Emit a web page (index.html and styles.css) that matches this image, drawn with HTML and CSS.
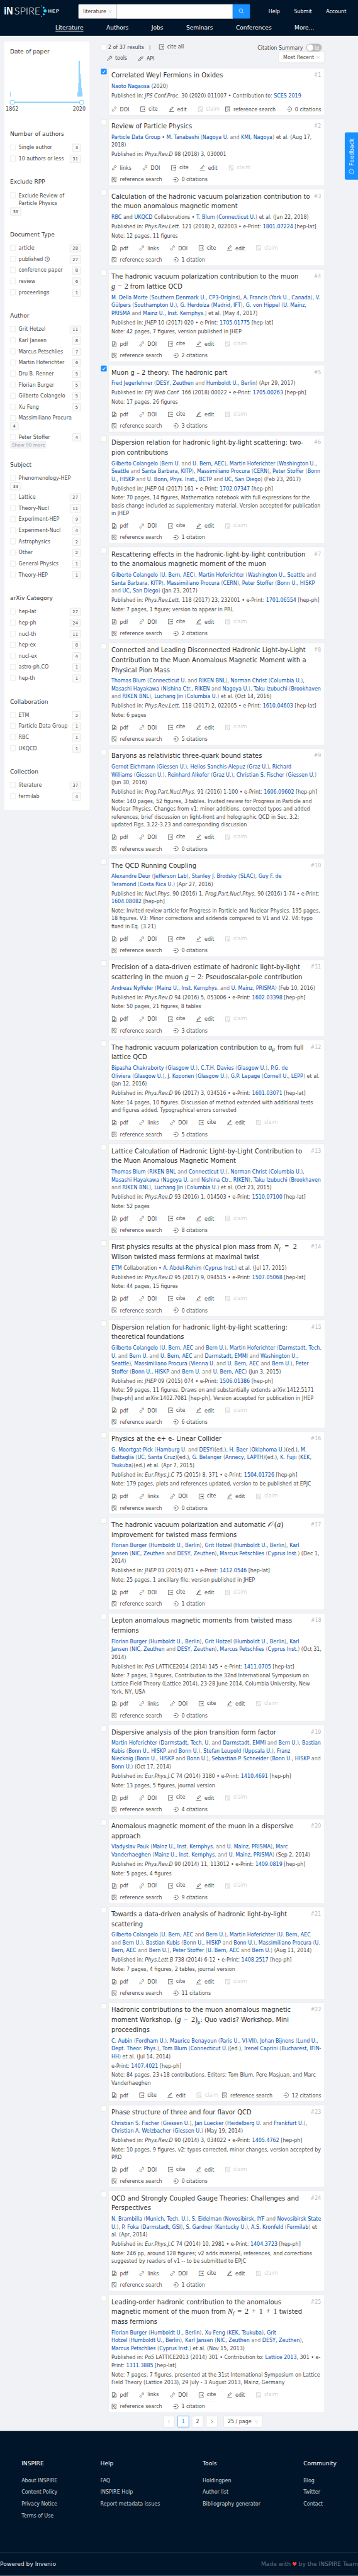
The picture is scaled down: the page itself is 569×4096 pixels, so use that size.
FILE: index.html
```html
<!DOCTYPE html>
<html lang="en">
<head>
<meta charset="utf-8">
<title>INSPIRE - Literature search</title>
<link rel="stylesheet" href="styles.css">
</head>
<body>
<svg class="defs" aria-hidden="true">
<symbol id="pdf" viewBox="0 0 16 16"><path d="M2.5 1.2h7l4 4v9.6h-11zM9.2 1.4v4h4"/><path d="M5 12.3c2-1 3-3 3-5.3 0 2.500 1.200 3.700 3.200 4.200-2.200-.2-4.200.1-6.200 1.100z"/></symbol>
<symbol id="link" viewBox="0 0 16 16"><path d="M6.200 9.800l3.600-3.600M7.300 4.600l1.900-1.900c1.200-1.200 2.700-1.200 3.700-.2s1 2.500-.2 3.700l-1.900 1.900M8.700 11.400l-1.900 1.900c-1.200 1.200-2.700 1.200-3.700.2s-1-2.500.2-3.700l1.900-1.900"/></symbol>
<symbol id="cite" viewBox="0 0 16 16"><path d="M14 4.500v-3H2v13h12v-3M6 8h8"/><path d="M11.300 5.600l3.200 2.400-3.200 2.400z" fill="currentColor" stroke="none"/></symbol>
<symbol id="edit" viewBox="0 0 16 16"><path d="M4.200 8.500l7-7 2 2-7 7-2.600.6zM1 14.600h14" stroke-width="1.4"/></symbol>
<symbol id="claim" viewBox="0 0 16 16"><path d="M7 14.500H2v-13h11v6M4.500 4.700h6M4.500 7.700h3"/><circle cx="11" cy="11.800" r="3.300"/><path d="M9.500 11.800l1.100 1.200 2-2.300"/></symbol>
<symbol id="ref" viewBox="0 0 16 16"><path d="M7 14.500H2v-13h11.500v6M4.500 4.700h6.500M4.500 7.700h3"/><circle cx="10.800" cy="11" r="2.500"/><path d="M12.700 13l1.800 2"/></symbol>
<symbol id="cit" viewBox="0 0 16 16"><path d="M4.500 2.800a6.500 6.500 0 1 1 0 10.400M.8 8h7"/><path d="M6.800 5.700l3.200 2.300-3.200 2.300z" fill="currentColor" stroke="none"/></symbol>
<symbol id="tool" viewBox="0 0 16 16"><path d="M9 2.500c1.300-1.200 2.700-1.300 3.900-1L10.500 4l1.600 1.600 2.400-2.400c.6 1.500.1 3-.8 4-1.100 1.100-2.700 1.300-3.900.8L4 13.800c-.6.7-1.500.7-2.100 0s-.6-1.500.1-2.100l5.900-5.700c-.5-1.300-.2-2.500 1.100-3.500z"/></symbol>
<symbol id="api" viewBox="0 0 16 16"><path d="M8.300 4.500l3.300 3.300M9.300 3.500c1.200-1.200 2.700-1.200 3.700-.2s1 2.500-.2 3.700L11.300 8.500 7.500 4.700zM13 3l1.800-1.800M4.700 7.500l3.800 3.800-1.600 1.500c-1.200 1.200-2.700 1.200-3.700.2s-1-2.500.2-3.700zM3 13l-1.800 1.800M6.200 8.500l1.300-1.300M7.700 10l1.300-1.300"/></symbol>
<symbol id="down" viewBox="0 0 12 12"><path d="M2 2.500l4 6.500 4-6.500"/></symbol>
</svg>
<div class="window"><div class="page">
<header class="top">
<div class="top-row">
<svg class="logo" viewBox="0 0 160 36"><text class="lg-b" x="-.8" y="26.700" textLength="25" lengthAdjust="spacingAndGlyphs">iN</text><text class="lg-l" x="28" y="26.700" textLength="73" lengthAdjust="spacingAndGlyphs">SPIRE</text><text class="lg-h" x="122.500" y="21.200" textLength="33" lengthAdjust="spacing">HEP</text><g class="dots"><circle cx="2.300" cy="9" r="2.300"/><circle cx="104" cy="2.600" r="1.600"/><circle cx="109.800" cy="7.300" r="2.800"/><circle cx="114" cy="16.300" r="4.400"/><circle cx="110.200" cy="26" r="2.800"/><circle cx="104" cy="31.600" r="1.600"/></g></svg>
<div class="search"><span class="scope">literature <svg class="dn"><use href="#down"/></svg></span><span class="field"></span><span class="go"><svg viewBox="0 0 16 16"><circle cx="6.800" cy="6.500" r="5"/><path d="M10.300 10.300l4.500 4.700"/></svg></span></div>
<div class="acct"><a>Help</a><a>Submit</a><a>Account</a></div>
</div>
<nav><a class="on">Literature</a><a>Authors</a><a>Jobs</a><a>Seminars</a><a>Conferences</a><a>More...</a></nav>
</header>
<div class="body">
<aside>
<h3>Date of paper</h3>
<svg class="hist" viewBox="0 0 204 100"><path d="M0 87.500h2v12.500H0zM188 87.500h2.500V62h1V0h4v37.500h2V50h1.500v25h1.500v12.500h2V100H188z"/></svg>
<div class="slider"><b></b><b></b></div>
<div class="years"><span>1862</span><span>2020</span></div>
<h3>Number of authors</h3>
<ul><li><u></u><p>Single author</p><em>3</em></li><li><u></u><p>10 authors or less</p><em>31</em></li></ul>
<h3>Exclude RPP</h3>
<ul><li class="wrap"><u></u><p>Exclude Review of<br>Particle Physics</p><em>36</em></li></ul>
<h3>Document Type</h3>
<ul><li><u></u><p>article</p><em>28</em></li><li><u></u><p>published <svg class="q" viewBox="0 0 14 14"><circle cx="7" cy="7" r="6.300"/><path d="M5 5.500c0-2.700 4-2.500 4 0 0 1.500-2 1.500-2 3M7 9.700v1.200"/></svg></p><em>27</em></li><li><u></u><p>conference paper</p><em>8</em></li><li><u></u><p>review</p><em>6</em></li><li><u></u><p>proceedings</p><em>1</em></li></ul>
<h3>Author</h3>
<ul><li><u></u><p>Grit Hotzel</p><em>11</em></li><li><u></u><p>Karl Jansen</p><em>8</em></li><li><u></u><p>Marcus Petschlies</p><em>7</em></li><li><u></u><p>Martin Hoferichter</p><em>6</em></li><li><u></u><p>Dru B. Renner</p><em>5</em></li><li><u></u><p>Florian Burger</p><em>5</em></li><li><u></u><p>Gilberto Colangelo</p><em>5</em></li><li><u></u><p>Xu Feng</p><em>5</em></li><li class="wrap"><u></u><p>Massimiliano Procura</p><em>4</em></li><li><u></u><p>Peter Stoffer</p><em>4</em></li></ul>
<span class="more">Show 90 more</span>
<h3>Subject</h3>
<ul><li class="wrap"><u></u><p>Phenomenology-HEP</p><em>33</em></li><li><u></u><p>Lattice</p><em>27</em></li><li><u></u><p>Theory-Nucl</p><em>11</em></li><li><u></u><p>Experiment-HEP</p><em>9</em></li><li><u></u><p>Experiment-Nucl</p><em>4</em></li><li><u></u><p>Astrophysics</p><em>2</em></li><li><u></u><p>Other</p><em>2</em></li><li><u></u><p>General Physics</p><em>1</em></li><li><u></u><p>Theory-HEP</p><em>1</em></li></ul>
<h3>arXiv Category</h3>
<ul><li><u></u><p>hep-lat</p><em>27</em></li><li><u></u><p>hep-ph</p><em>24</em></li><li><u></u><p>nucl-th</p><em>11</em></li><li><u></u><p>hep-ex</p><em>8</em></li><li><u></u><p>nucl-ex</p><em>4</em></li><li><u></u><p>astro-ph.CO</p><em>1</em></li><li><u></u><p>hep-th</p><em>1</em></li></ul>
<h3>Collaboration</h3>
<ul><li><u></u><p>ETM</p><em>2</em></li><li><u></u><p>Particle Data Group</p><em>1</em></li><li><u></u><p>RBC</p><em>1</em></li><li><u></u><p>UKQCD</p><em>1</em></li></ul>
<h3>Collection</h3>
<ul><li><u></u><p>literature</p><em>37</em></li><li><u></u><p>fermilab</p><em>4</em></li></ul>
</aside>
<main>
<div class="bar">
<div class="bar-l"><div class="line"><u></u><span class="count">2 of 37 results</span><span class="sep"></span><span class="act up"><svg><use href="#cite"/></svg>cite all</span></div>
<div class="line two"><span class="act up"><svg><use href="#tool"/></svg>tools</span><span class="act"><svg><use href="#api"/></svg>API</span></div></div>
<div class="bar-r"><div class="sum">Citation Summary <span class="switch"><i></i><svg viewBox="0 0 12 12"><path d="M1 .5v10.500h10.500M3.500 9V6M6 9V3.500M8 9V5.500M10.200 9V2"/></svg></span></div><span class="sort">Most Recent <svg class="dn"><use href="#down"/></svg></span></div>
</div>

<article><u class="ck"><svg viewBox="0 0 16 16"><path d="M4 8l3 3.200 5.200-6.400"/></svg></u><div class="card">
<div class="head"><h2>Correlated Weyl Fermions in Oxides</h2><b>#1</b></div>
<p class="au"><a>Naoto Nagaosa</a> (2020)</p>
<p>Published in: <i>JPS Conf.Proc.</i> 30 (2020) 011007 • Contribution to: <a>SCES 2019</a></p>
<div class="acts nonote"><div><span class="act"><svg><use href="#link"/></svg>DOI</span><span class="act up"><svg><use href="#cite"/></svg>cite</span><span class="act"><svg><use href="#edit"/></svg>edit</span><span class="act off"><svg><use href="#claim"/></svg>claim</span></div><div><span class="act"><svg><use href="#ref"/></svg>reference search</span><span class="act"><svg><use href="#cit"/></svg>0 citations</span></div></div></div></article>

<article><u></u><div class="card">
<div class="head"><h2>Review of Particle Physics</h2><b>#2</b></div>
<p class="au"><a>Particle Data Group</a> • <a>M. Tanabashi</a> <s>(<a>Nagoya U.</a> and <a>KMI, Nagoya</a>)</s> et al. (Aug 17,<br>2018)</p>
<p>Published in: <i>Phys.Rev.D</i> 98 (2018) 3, 030001</p>
<div class="acts nonote"><div><span class="act"><svg><use href="#link"/></svg>links</span><span class="act"><svg><use href="#link"/></svg>DOI</span><span class="act up"><svg><use href="#cite"/></svg>cite</span><span class="act"><svg><use href="#edit"/></svg>edit</span><span class="act off"><svg><use href="#claim"/></svg>claim</span></div><div><span class="act"><svg><use href="#ref"/></svg>reference search</span><span class="act"><svg><use href="#cit"/></svg>0 citations</span></div></div></div></article>

<article><u></u><div class="card">
<div class="head"><h2>Calculation of the hadronic vacuum polarization contribution to<br>the muon anomalous magnetic moment</h2><b>#3</b></div>
<p class="au"><a>RBC</a> and <a>UKQCD</a> Collaborations • <a>T. Blum</a> <s>(<a>Connecticut U.</a>)</s> et al. (Jan 22, 2018)</p>
<p>Published in: <i>Phys.Rev.Lett.</i> 121 (2018) 2, 022003 • e-Print: <a>1801.07224</a> [hep-lat]</p>
<p>Note: 12 pages, 11 figures</p>
<div class="acts"><div><span class="act"><svg><use href="#pdf"/></svg>pdf</span><span class="act"><svg><use href="#link"/></svg>links</span><span class="act"><svg><use href="#link"/></svg>DOI</span><span class="act up"><svg><use href="#cite"/></svg>cite</span><span class="act"><svg><use href="#edit"/></svg>edit</span><span class="act off"><svg><use href="#claim"/></svg>claim</span></div><div><span class="act"><svg><use href="#ref"/></svg>reference search</span><span class="act"><svg><use href="#cit"/></svg>1 citation</span></div></div></div></article>

<article><u></u><div class="card">
<div class="head"><h2>The hadronic vacuum polarization contribution to the muon<br><span class="math m47"><i>g</i><span>−</span><span>2</span></span> from lattice QCD</h2><b>#4</b></div>
<p class="au"><a>M. Della Morte</a> <s>(<a>Southern Denmark U., CP3-Origins</a>)</s>, <a>A. Francis</a> <s>(<a>York U., Canada</a>)</s>, <a>V.<br>Gülpers</a> <s>(<a>Southampton U.</a>)</s>, <a>G. Herdoíza</a> <s>(<a>Madrid, IFT</a>)</s>, <a>G. von Hippel</a> <s>(<a>U. Mainz,<br>PRISMA</a> and <a>Mainz U., Inst. Kernphys.</a>)</s> et al. (May 4, 2017)</p>
<p>Published in: <i>JHEP</i> 10 (2017) 020 • e-Print: <a>1705.01775</a> [hep-lat]</p>
<p>Note: 42 pages, 7 figures, version published in JHEP</p>
<div class="acts"><div><span class="act"><svg><use href="#pdf"/></svg>pdf</span><span class="act"><svg><use href="#link"/></svg>DOI</span><span class="act up"><svg><use href="#cite"/></svg>cite</span><span class="act"><svg><use href="#edit"/></svg>edit</span><span class="act off"><svg><use href="#claim"/></svg>claim</span></div><div><span class="act"><svg><use href="#ref"/></svg>reference search</span><span class="act"><svg><use href="#cit"/></svg>2 citations</span></div></div></div></article>

<article><u class="ck"><svg viewBox="0 0 16 16"><path d="M4 8l3 3.200 5.200-6.400"/></svg></u><div class="card">
<div class="head"><h2>Muon g – 2 theory: The hadronic part</h2><b>#5</b></div>
<p class="au"><a>Fred Jegerlehner</a> <s>(<a>DESY, Zeuthen</a> and <a>Humboldt U., Berlin</a>)</s> (Apr 29, 2017)</p>
<p>Published in: <i>EPJ Web Conf.</i> 166 (2018) 00022 • e-Print: <a>1705.00263</a> [hep-ph]</p>
<p>Note: 17 pages, 26 figures</p>
<div class="acts"><div><span class="act"><svg><use href="#pdf"/></svg>pdf</span><span class="act"><svg><use href="#link"/></svg>DOI</span><span class="act up"><svg><use href="#cite"/></svg>cite</span><span class="act"><svg><use href="#edit"/></svg>edit</span><span class="act off"><svg><use href="#claim"/></svg>claim</span></div><div><span class="act"><svg><use href="#ref"/></svg>reference search</span><span class="act"><svg><use href="#cit"/></svg>3 citations</span></div></div></div></article>

<article><u></u><div class="card">
<div class="head"><h2>Dispersion relation for hadronic light-by-light scattering: two-<br>pion contributions</h2><b>#6</b></div>
<p class="au"><a>Gilberto Colangelo</a> <s>(<a>Bern U.</a> and <a>U. Bern, AEC</a>)</s>, <a>Martin Hoferichter</a> <s>(<a>Washington U.,<br>Seattle</a> and <a>Santa Barbara, KITP</a>)</s>, <a>Massimiliano Procura</a> <s>(<a>CERN</a>)</s>, <a>Peter Stoffer</a> <s>(<a>Bonn<br>U., HISKP</a> and <a>U. Bonn, Phys. Inst., BCTP</a> and <a>UC, San Diego</a>)</s> (Feb 23, 2017)</p>
<p>Published in: <i>JHEP</i> 04 (2017) 161 • e-Print: <a>1702.07347</a> [hep-ph]</p>
<p>Note: 70 pages, 14 figures, Mathematica notebook with full expressions for the<br>basis change included as supplementary material. Version accepted for publication<br>in JHEP</p>
<div class="acts"><div><span class="act"><svg><use href="#pdf"/></svg>pdf</span><span class="act"><svg><use href="#link"/></svg>DOI</span><span class="act up"><svg><use href="#cite"/></svg>cite</span><span class="act"><svg><use href="#edit"/></svg>edit</span><span class="act off"><svg><use href="#claim"/></svg>claim</span></div><div><span class="act"><svg><use href="#ref"/></svg>reference search</span><span class="act"><svg><use href="#cit"/></svg>1 citation</span></div></div></div></article>

<article><u></u><div class="card">
<div class="head"><h2>Rescattering effects in the hadronic-light-by-light contribution<br>to the anomalous magnetic moment of the muon</h2><b>#7</b></div>
<p class="au"><a>Gilberto Colangelo</a> <s>(<a>U. Bern, AEC</a>)</s>, <a>Martin Hoferichter</a> <s>(<a>Washington U., Seattle</a> and<br><a>Santa Barbara, KITP</a>)</s>, <a>Massimiliano Procura</a> <s>(<a>CERN</a>)</s>, <a>Peter Stoffer</a> <s>(<a>Bonn U., HISKP</a><br>and <a>UC, San Diego</a>)</s> (Jan 23, 2017)</p>
<p>Published in: <i>Phys.Rev.Lett.</i> 118 (2017) 23, 232001 • e-Print: <a>1701.06554</a> [hep-ph]</p>
<p>Note: 7 pages, 1 figure; version to appear in PRL</p>
<div class="acts"><div><span class="act"><svg><use href="#pdf"/></svg>pdf</span><span class="act"><svg><use href="#link"/></svg>DOI</span><span class="act up"><svg><use href="#cite"/></svg>cite</span><span class="act"><svg><use href="#edit"/></svg>edit</span><span class="act off"><svg><use href="#claim"/></svg>claim</span></div><div><span class="act"><svg><use href="#ref"/></svg>reference search</span><span class="act"><svg><use href="#cit"/></svg>2 citations</span></div></div></div></article>

<article><u></u><div class="card">
<div class="head"><h2>Connected and Leading Disconnected Hadronic Light-by-Light<br>Contribution to the Muon Anomalous Magnetic Moment with a<br>Physical Pion Mass</h2><b>#8</b></div>
<p class="au"><a>Thomas Blum</a> <s>(<a>Connecticut U.</a> and <a>RIKEN BNL</a>)</s>, <a>Norman Christ</a> <s>(<a>Columbia U.</a>)</s>,<br><a>Masashi Hayakawa</a> <s>(<a>Nishina Ctr., RIKEN</a> and <a>Nagoya U.</a>)</s>, <a>Taku Izubuchi</a> <s>(<a>Brookhaven</a><br>and <a>RIKEN BNL</a>)</s>, <a>Luchang Jin</a> <s>(<a>Columbia U.</a>)</s> et al. (Oct 14, 2016)</p>
<p>Published in: <i>Phys.Rev.Lett.</i> 118 (2017) 2, 022005 • e-Print: <a>1610.04603</a> [hep-lat]</p>
<p>Note: 6 pages</p>
<div class="acts"><div><span class="act"><svg><use href="#pdf"/></svg>pdf</span><span class="act"><svg><use href="#link"/></svg>DOI</span><span class="act up"><svg><use href="#cite"/></svg>cite</span><span class="act"><svg><use href="#edit"/></svg>edit</span><span class="act off"><svg><use href="#claim"/></svg>claim</span></div><div><span class="act"><svg><use href="#ref"/></svg>reference search</span><span class="act"><svg><use href="#cit"/></svg>5 citations</span></div></div></div></article>

<article><u></u><div class="card">
<div class="head"><h2>Baryons as relativistic three-quark bound states</h2><b>#9</b></div>
<p class="au"><a>Gernot Eichmann</a> <s>(<a>Giessen U.</a>)</s>, <a>Helios Sanchis-Alepuz</a> <s>(<a>Graz U.</a>)</s>, <a>Richard<br>Williams</a> <s>(<a>Giessen U.</a>)</s>, <a>Reinhard Alkofer</a> <s>(<a>Graz U.</a>)</s>, <a>Christian S. Fischer</a> <s>(<a>Giessen U.</a>)</s><br>(Jun 30, 2016)</p>
<p>Published in: <i>Prog.Part.Nucl.Phys.</i> 91 (2016) 1-100 • e-Print: <a>1606.09602</a> [hep-ph]</p>
<p>Note: 140 pages, 52 figures, 3 tables. Invited review for Progress in Particle and<br>Nuclear Physics. Changes from v1: minor additions, corrected typos and added<br>references; brief discussion on light-front and holographic QCD in Sec. 3.2;<br>updated Figs. 3.22-3.23 and corresponding discussion</p>
<div class="acts"><div><span class="act"><svg><use href="#pdf"/></svg>pdf</span><span class="act"><svg><use href="#link"/></svg>DOI</span><span class="act up"><svg><use href="#cite"/></svg>cite</span><span class="act"><svg><use href="#edit"/></svg>edit</span><span class="act off"><svg><use href="#claim"/></svg>claim</span></div><div><span class="act"><svg><use href="#ref"/></svg>reference search</span><span class="act"><svg><use href="#cit"/></svg>0 citations</span></div></div></div></article>

<article><u></u><div class="card">
<div class="head"><h2>The QCD Running Coupling</h2><b>#10</b></div>
<p class="au"><a>Alexandre Deur</a> <s>(<a>Jefferson Lab</a>)</s>, <a>Stanley J. Brodsky</a> <s>(<a>SLAC</a>)</s>, <a>Guy F. de<br>Teramond</a> <s>(<a>Costa Rica U.</a>)</s> (Apr 27, 2016)</p>
<p>Published in: <i>Nucl.Phys.</i> 90 (2016) 1, <i>Prog.Part.Nucl.Phys.</i> 90 (2016) 1-74 • e-Print:<br><a>1604.08082</a> [hep-ph]</p>
<p>Note: Invited review article for Progress in Particle and Nuclear Physics. 195 pages,<br>18 figures. V3: Minor corrections and addenda compared to V1 and V2. V4: typo<br>fixed in Eq. (3.21)</p>
<div class="acts"><div><span class="act"><svg><use href="#pdf"/></svg>pdf</span><span class="act"><svg><use href="#link"/></svg>DOI</span><span class="act up"><svg><use href="#cite"/></svg>cite</span><span class="act"><svg><use href="#edit"/></svg>edit</span><span class="act off"><svg><use href="#claim"/></svg>claim</span></div><div><span class="act"><svg><use href="#ref"/></svg>reference search</span><span class="act"><svg><use href="#cit"/></svg>0 citations</span></div></div></div></article>

<article><u></u><div class="card">
<div class="head"><h2>Precision of a data-driven estimate of hadronic light-by-light<br>scattering in the muon <span class="math m47"><i>g</i><span>−</span><span>2</span></span>: Pseudoscalar-pole contribution</h2><b>#11</b></div>
<p class="au"><a>Andreas Nyffeler</a> <s>(<a>Mainz U., Inst. Kernphys.</a> and <a>U. Mainz, PRISMA</a>)</s> (Feb 10, 2016)</p>
<p>Published in: <i>Phys.Rev.D</i> 94 (2016) 5, 053006 • e-Print: <a>1602.03398</a> [hep-ph]</p>
<p>Note: 50 pages, 21 figures, 8 tables</p>
<div class="acts"><div><span class="act"><svg><use href="#pdf"/></svg>pdf</span><span class="act"><svg><use href="#link"/></svg>DOI</span><span class="act up"><svg><use href="#cite"/></svg>cite</span><span class="act"><svg><use href="#edit"/></svg>edit</span><span class="act off"><svg><use href="#claim"/></svg>claim</span></div><div><span class="act"><svg><use href="#ref"/></svg>reference search</span><span class="act"><svg><use href="#cit"/></svg>3 citations</span></div></div></div></article>

<article><u></u><div class="card">
<div class="head"><h2>The hadronic vacuum polarization contribution to <span class="math m20"><i>a<sub>μ</sub></i></span> from full<br>lattice QCD</h2><b>#12</b></div>
<p class="au"><a>Bipasha Chakraborty</a> <s>(<a>Glasgow U.</a>)</s>, <a>C.T.H. Davies</a> <s>(<a>Glasgow U.</a>)</s>, <a>P.G. de<br>Oliviera</a> <s>(<a>Glasgow U.</a>)</s>, <a>J. Koponen</a> <s>(<a>Glasgow U.</a>)</s>, <a>G.P. Lepage</a> <s>(<a>Cornell U., LEPP</a>)</s> et al.<br>(Jan 12, 2016)</p>
<p>Published in: <i>Phys.Rev.D</i> 96 (2017) 3, 034516 • e-Print: <a>1601.03071</a> [hep-lat]</p>
<p>Note: 14 pages, 10 figures. Discussion of method extended with additional tests<br>and figures added. Typographical errors corrected</p>
<div class="acts"><div><span class="act"><svg><use href="#pdf"/></svg>pdf</span><span class="act"><svg><use href="#link"/></svg>links</span><span class="act"><svg><use href="#link"/></svg>DOI</span><span class="act up"><svg><use href="#cite"/></svg>cite</span><span class="act"><svg><use href="#edit"/></svg>edit</span><span class="act off"><svg><use href="#claim"/></svg>claim</span></div><div><span class="act"><svg><use href="#ref"/></svg>reference search</span><span class="act"><svg><use href="#cit"/></svg>5 citations</span></div></div></div></article>

<article><u></u><div class="card">
<div class="head"><h2>Lattice Calculation of Hadronic Light-by-Light Contribution to<br>the Muon Anomalous Magnetic Moment</h2><b>#13</b></div>
<p class="au"><a>Thomas Blum</a> <s>(<a>RIKEN BNL</a> and <a>Connecticut U.</a>)</s>, <a>Norman Christ</a> <s>(<a>Columbia U.</a>)</s>,<br><a>Masashi Hayakawa</a> <s>(<a>Nagoya U.</a> and <a>Nishina Ctr., RIKEN</a>)</s>, <a>Taku Izubuchi</a> <s>(<a>Brookhaven</a><br>and <a>RIKEN BNL</a>)</s>, <a>Luchang Jin</a> <s>(<a>Columbia U.</a>)</s> et al. (Oct 23, 2015)</p>
<p>Published in: <i>Phys.Rev.D</i> 93 (2016) 1, 014503 • e-Print: <a>1510.07100</a> [hep-lat]</p>
<p>Note: 52 pages</p>
<div class="acts"><div><span class="act"><svg><use href="#pdf"/></svg>pdf</span><span class="act"><svg><use href="#link"/></svg>DOI</span><span class="act up"><svg><use href="#cite"/></svg>cite</span><span class="act"><svg><use href="#edit"/></svg>edit</span><span class="act off"><svg><use href="#claim"/></svg>claim</span></div><div><span class="act"><svg><use href="#ref"/></svg>reference search</span><span class="act"><svg><use href="#cit"/></svg>8 citations</span></div></div></div></article>

<article><u></u><div class="card">
<div class="head"><h2>First physics results at the physical pion mass from <span class="math m65"><i>N<sub>f</sub></i><span>=</span><span>2</span></span><br>Wilson twisted mass fermions at maximal twist</h2><b>#14</b></div>
<p class="au"><a>ETM</a> Collaboration • <a>A. Abdel-Rehim</a> <s>(<a>Cyprus Inst.</a>)</s> et al. (Jul 17, 2015)</p>
<p>Published in: <i>Phys.Rev.D</i> 95 (2017) 9, 094515 • e-Print: <a>1507.05068</a> [hep-lat]</p>
<p>Note: 44 pages, 15 figures</p>
<div class="acts"><div><span class="act"><svg><use href="#pdf"/></svg>pdf</span><span class="act"><svg><use href="#link"/></svg>DOI</span><span class="act up"><svg><use href="#cite"/></svg>cite</span><span class="act"><svg><use href="#edit"/></svg>edit</span><span class="act off"><svg><use href="#claim"/></svg>claim</span></div><div><span class="act"><svg><use href="#ref"/></svg>reference search</span><span class="act"><svg><use href="#cit"/></svg>0 citations</span></div></div></div></article>

<article><u></u><div class="card">
<div class="head"><h2>Dispersion relation for hadronic light-by-light scattering:<br>theoretical foundations</h2><b>#15</b></div>
<p class="au"><a>Gilberto Colangelo</a> <s>(<a>U. Bern, AEC</a> and <a>Bern U.</a>)</s>, <a>Martin Hoferichter</a> <s>(<a>Darmstadt, Tech.<br>U.</a> and <a>Bern U.</a> and <a>U. Bern, AEC</a> and <a>Darmstadt, EMMI</a> and <a>Washington U.,<br>Seattle</a>)</s>, <a>Massimiliano Procura</a> <s>(<a>Vienna U.</a> and <a>U. Bern, AEC</a> and <a>Bern U.</a>)</s>, <a>Peter<br>Stoffer</a> <s>(<a>Bonn U., HISKP</a> and <a>Bern U.</a> and <a>U. Bern, AEC</a>)</s> (Jun 3, 2015)</p>
<p>Published in: <i>JHEP</i> 09 (2015) 074 • e-Print: <a>1506.01386</a> [hep-ph]</p>
<p>Note: 59 pages, 11 figures. Draws on and substantially extends arXiv:1412.5171<br>[hep-ph] and arXiv:1402.7081 [hep-ph]. Version accepted for publication in JHEP</p>
<div class="acts"><div><span class="act"><svg><use href="#pdf"/></svg>pdf</span><span class="act"><svg><use href="#link"/></svg>DOI</span><span class="act up"><svg><use href="#cite"/></svg>cite</span><span class="act"><svg><use href="#edit"/></svg>edit</span><span class="act off"><svg><use href="#claim"/></svg>claim</span></div><div><span class="act"><svg><use href="#ref"/></svg>reference search</span><span class="act"><svg><use href="#cit"/></svg>6 citations</span></div></div></div></article>

<article><u></u><div class="card">
<div class="head"><h2>Physics at the e+ e- Linear Collider</h2><b>#16</b></div>
<p class="au"><a>G. Moortgat-Pick</a> <s>(<a>Hamburg U.</a> and <a>DESY</a>)</s>(ed.), <a>H. Baer</a> <s>(<a>Oklahoma U.</a>)</s>(ed.), <a>M.<br>Battaglia</a> <s>(<a>UC, Santa Cruz</a>)</s>(ed.), <a>G. Belanger</a> <s>(<a>Annecy, LAPTH</a>)</s>(ed.), <a>K. Fujii</a> <s>(<a>KEK,<br>Tsukuba</a>)</s>(ed.) et al. (Apr 7, 2015)</p>
<p>Published in: <i>Eur.Phys.J.C</i> 75 (2015) 8, 371 • e-Print: <a>1504.01726</a> [hep-ph]</p>
<p>Note: 179 pages, plots and references updated, version to be published at EPJC</p>
<div class="acts"><div><span class="act"><svg><use href="#pdf"/></svg>pdf</span><span class="act"><svg><use href="#link"/></svg>links</span><span class="act"><svg><use href="#link"/></svg>DOI</span><span class="act up"><svg><use href="#cite"/></svg>cite</span><span class="act"><svg><use href="#edit"/></svg>edit</span><span class="act off"><svg><use href="#claim"/></svg>claim</span></div><div><span class="act"><svg><use href="#ref"/></svg>reference search</span><span class="act"><svg><use href="#cit"/></svg>0 citations</span></div></div></div></article>

<article><u></u><div class="card">
<div class="head"><h2>The hadronic vacuum polarization and automatic <span class="math m44"><i>𝒪</i><span>(<i>a</i>)</span></span><br>improvement for twisted mass fermions</h2><b>#17</b></div>
<p class="au"><a>Florian Burger</a> <s>(<a>Humboldt U., Berlin</a>)</s>, <a>Grit Hotzel</a> <s>(<a>Humboldt U., Berlin</a>)</s>, <a>Karl<br>Jansen</a> <s>(<a>NIC, Zeuthen</a> and <a>DESY, Zeuthen</a>)</s>, <a>Marcus Petschlies</a> <s>(<a>Cyprus Inst.</a>)</s> (Dec 1,<br>2014)</p>
<p>Published in: <i>JHEP</i> 03 (2015) 073 • e-Print: <a>1412.0546</a> [hep-lat]</p>
<p>Note: 25 pages, 1 ancillary file; version published in JHEP</p>
<div class="acts"><div><span class="act"><svg><use href="#pdf"/></svg>pdf</span><span class="act"><svg><use href="#link"/></svg>DOI</span><span class="act up"><svg><use href="#cite"/></svg>cite</span><span class="act"><svg><use href="#edit"/></svg>edit</span><span class="act off"><svg><use href="#claim"/></svg>claim</span></div><div><span class="act"><svg><use href="#ref"/></svg>reference search</span><span class="act"><svg><use href="#cit"/></svg>1 citation</span></div></div></div></article>

<article><u></u><div class="card">
<div class="head"><h2>Lepton anomalous magnetic moments from twisted mass<br>fermions</h2><b>#18</b></div>
<p class="au"><a>Florian Burger</a> <s>(<a>Humboldt U., Berlin</a>)</s>, <a>Grit Hotzel</a> <s>(<a>Humboldt U., Berlin</a>)</s>, <a>Karl<br>Jansen</a> <s>(<a>NIC, Zeuthen</a> and <a>DESY, Zeuthen</a>)</s>, <a>Marcus Petschlies</a> <s>(<a>Cyprus Inst.</a>)</s> (Oct 31,<br>2014)</p>
<p>Published in: <i>PoS</i> LATTICE2014 (2014) 145 • e-Print: <a>1411.0705</a> [hep-lat]</p>
<p>Note: 7 pages, 3 figures, Contribution to the 32nd International Symposium on<br>Lattice Field Theory (Lattice 2014), 23-28 June 2014, Columbia University, New<br>York, NY, USA</p>
<div class="acts"><div><span class="act"><svg><use href="#pdf"/></svg>pdf</span><span class="act"><svg><use href="#link"/></svg>links</span><span class="act"><svg><use href="#link"/></svg>DOI</span><span class="act up"><svg><use href="#cite"/></svg>cite</span><span class="act"><svg><use href="#edit"/></svg>edit</span><span class="act off"><svg><use href="#claim"/></svg>claim</span></div><div><span class="act"><svg><use href="#ref"/></svg>reference search</span><span class="act"><svg><use href="#cit"/></svg>0 citations</span></div></div></div></article>

<article><u></u><div class="card">
<div class="head"><h2>Dispersive analysis of the pion transition form factor</h2><b>#19</b></div>
<p class="au"><a>Martin Hoferichter</a> <s>(<a>Darmstadt, Tech. U.</a> and <a>Darmstadt, EMMI</a> and <a>Bern U.</a>)</s>, <a>Bastian<br>Kubis</a> <s>(<a>Bonn U., HISKP</a> and <a>Bonn U.</a>)</s>, <a>Stefan Leupold</a> <s>(<a>Uppsala U.</a>)</s>, <a>Franz<br>Niecknig</a> <s>(<a>Bonn U., HISKP</a> and <a>Bonn U.</a>)</s>, <a>Sebastian P. Schneider</a> <s>(<a>Bonn U., HISKP</a> and<br><a>Bonn U.</a>)</s> (Oct 17, 2014)</p>
<p>Published in: <i>Eur.Phys.J.C</i> 74 (2014) 3180 • e-Print: <a>1410.4691</a> [hep-ph]</p>
<p>Note: 13 pages, 5 figures, journal version</p>
<div class="acts"><div><span class="act"><svg><use href="#pdf"/></svg>pdf</span><span class="act"><svg><use href="#link"/></svg>DOI</span><span class="act up"><svg><use href="#cite"/></svg>cite</span><span class="act"><svg><use href="#edit"/></svg>edit</span><span class="act off"><svg><use href="#claim"/></svg>claim</span></div><div><span class="act"><svg><use href="#ref"/></svg>reference search</span><span class="act"><svg><use href="#cit"/></svg>4 citations</span></div></div></div></article>

<article><u></u><div class="card">
<div class="head"><h2>Anomalous magnetic moment of the muon in a dispersive<br>approach</h2><b>#20</b></div>
<p class="au"><a>Vladyslav Pauk</a> <s>(<a>Mainz U., Inst. Kernphys.</a> and <a>U. Mainz, PRISMA</a>)</s>, <a>Marc<br>Vanderhaeghen</a> <s>(<a>Mainz U., Inst. Kernphys.</a> and <a>U. Mainz, PRISMA</a>)</s> (Sep 2, 2014)</p>
<p>Published in: <i>Phys.Rev.D</i> 90 (2014) 11, 113012 • e-Print: <a>1409.0819</a> [hep-ph]</p>
<p>Note: 5 pages, 4 figures</p>
<div class="acts"><div><span class="act"><svg><use href="#pdf"/></svg>pdf</span><span class="act"><svg><use href="#link"/></svg>DOI</span><span class="act up"><svg><use href="#cite"/></svg>cite</span><span class="act"><svg><use href="#edit"/></svg>edit</span><span class="act off"><svg><use href="#claim"/></svg>claim</span></div><div><span class="act"><svg><use href="#ref"/></svg>reference search</span><span class="act"><svg><use href="#cit"/></svg>9 citations</span></div></div></div></article>

<article><u></u><div class="card">
<div class="head"><h2>Towards a data-driven analysis of hadronic light-by-light<br>scattering</h2><b>#21</b></div>
<p class="au"><a>Gilberto Colangelo</a> <s>(<a>U. Bern, AEC</a> and <a>Bern U.</a>)</s>, <a>Martin Hoferichter</a> <s>(<a>U. Bern, AEC</a><br>and <a>Bern U.</a>)</s>, <a>Bastian Kubis</a> <s>(<a>Bonn U., HISKP</a> and <a>Bonn U.</a>)</s>, <a>Massimiliano Procura</a> <s>(<a>U.<br>Bern, AEC</a> and <a>Bern U.</a>)</s>, <a>Peter Stoffer</a> <s>(<a>U. Bern, AEC</a> and <a>Bern U.</a>)</s> (Aug 11, 2014)</p>
<p>Published in: <i>Phys.Lett.B</i> 738 (2014) 6-12 • e-Print: <a>1408.2517</a> [hep-ph]</p>
<p>Note: 7 pages, 4 figures, 2 tables, journal version</p>
<div class="acts"><div><span class="act"><svg><use href="#pdf"/></svg>pdf</span><span class="act"><svg><use href="#link"/></svg>DOI</span><span class="act up"><svg><use href="#cite"/></svg>cite</span><span class="act"><svg><use href="#edit"/></svg>edit</span><span class="act off"><svg><use href="#claim"/></svg>claim</span></div><div><span class="act"><svg><use href="#ref"/></svg>reference search</span><span class="act"><svg><use href="#cit"/></svg>11 citations</span></div></div></div></article>

<article><u></u><div class="card">
<div class="head"><h2>Hadronic contributions to the muon anomalous magnetic<br>moment Workshop. <span class="math m72"><span>(<i>g</i></span><span>−</span><span>2)<i><sub>μ</sub></i></span></span>: Quo vadis? Workshop. Mini<br>proceedings</h2><b>#22</b></div>
<p class="au"><a>C. Aubin</a> <s>(<a>Fordham U.</a>)</s>, <a>Maurice Benayoun</a> <s>(<a>Paris U., VI-VII</a>)</s>, <a>Johan Bijnens</a> <s>(<a>Lund U.,<br>Dept. Theor. Phys.</a>)</s>, <a>Tom Blum</a> <s>(<a>Connecticut U.</a>)</s>(ed.), <a>Irenel Caprini</a> <s>(<a>Bucharest, IFIN-<br>HH</a>)</s> et al. (Jul 14, 2014)</p>
<p>e-Print: <a>1407.4021</a> [hep-ph]</p>
<p>Note: 84 pages, 23+18 contributions. Editors: Tom Blum, Pere Masjuan, and Marc<br>Vanderhaeghen</p>
<div class="acts"><div><span class="act"><svg><use href="#pdf"/></svg>pdf</span><span class="act up"><svg><use href="#cite"/></svg>cite</span><span class="act"><svg><use href="#edit"/></svg>edit</span><span class="act off"><svg><use href="#claim"/></svg>claim</span></div><div><span class="act"><svg><use href="#ref"/></svg>reference search</span><span class="act"><svg><use href="#cit"/></svg>12 citations</span></div></div></div></article>

<article><u></u><div class="card">
<div class="head"><h2>Phase structure of three and four flavor QCD</h2><b>#23</b></div>
<p class="au"><a>Christian S. Fischer</a> <s>(<a>Giessen U.</a>)</s>, <a>Jan Luecker</a> <s>(<a>Heidelberg U.</a> and <a>Frankfurt U.</a>)</s>,<br><a>Christian A. Welzbacher</a> <s>(<a>Giessen U.</a>)</s> (May 19, 2014)</p>
<p>Published in: <i>Phys.Rev.D</i> 90 (2014) 3, 034022 • e-Print: <a>1405.4762</a> [hep-ph]</p>
<p>Note: 10 pages, 9 figures, v2: typos corrected, minor changes, version accepted by<br>PRD</p>
<div class="acts"><div><span class="act"><svg><use href="#pdf"/></svg>pdf</span><span class="act"><svg><use href="#link"/></svg>DOI</span><span class="act up"><svg><use href="#cite"/></svg>cite</span><span class="act"><svg><use href="#edit"/></svg>edit</span><span class="act off"><svg><use href="#claim"/></svg>claim</span></div><div><span class="act"><svg><use href="#ref"/></svg>reference search</span><span class="act"><svg><use href="#cit"/></svg>0 citations</span></div></div></div></article>

<article><u></u><div class="card">
<div class="head"><h2>QCD and Strongly Coupled Gauge Theories: Challenges and<br>Perspectives</h2><b>#24</b></div>
<p class="au"><a>N. Brambilla</a> <s>(<a>Munich, Tech. U.</a>)</s>, <a>S. Eidelman</a> <s>(<a>Novosibirsk, IYF</a> and <a>Novosibirsk State<br>U.</a>)</s>, <a>P. Foka</a> <s>(<a>Darmstadt, GSI</a>)</s>, <a>S. Gardner</a> <s>(<a>Kentucky U.</a>)</s>, <a>A.S. Kronfeld</a> <s>(<a>Fermilab</a>)</s> et<br>al. (Apr, 2014)</p>
<p>Published in: <i>Eur.Phys.J.C</i> 74 (2014) 10, 2981 • e-Print: <a>1404.3723</a> [hep-ph]</p>
<p>Note: 246 pp, around 128 figures; v2 adds material, references, and corrections<br>suggested by readers of v1 -- to be submitted to EPJC</p>
<div class="acts"><div><span class="act"><svg><use href="#pdf"/></svg>pdf</span><span class="act"><svg><use href="#link"/></svg>links</span><span class="act"><svg><use href="#link"/></svg>DOI</span><span class="act up"><svg><use href="#cite"/></svg>cite</span><span class="act"><svg><use href="#edit"/></svg>edit</span><span class="act off"><svg><use href="#claim"/></svg>claim</span></div><div><span class="act"><svg><use href="#ref"/></svg>reference search</span><span class="act"><svg><use href="#cit"/></svg>1 citation</span></div></div></div></article>

<article><u></u><div class="card">
<div class="head"><h2>Leading-order hadronic contribution to the anomalous<br>magnetic moment of the muon from <span class="math m138"><i>N<sub>f</sub></i><span>=</span><span>2</span><span>+</span><span>1</span><span>+</span><span>1</span></span> twisted<br>mass fermions</h2><b>#25</b></div>
<p class="au"><a>Florian Burger</a> <s>(<a>Humboldt U., Berlin</a>)</s>, <a>Xu Feng</a> <s>(<a>KEK, Tsukuba</a>)</s>, <a>Grit<br>Hotzel</a> <s>(<a>Humboldt U., Berlin</a>)</s>, <a>Karl Jansen</a> <s>(<a>NIC, Zeuthen</a> and <a>DESY, Zeuthen</a>)</s>,<br><a>Marcus Petschlies</a> <s>(<a>Cyprus Inst.</a>)</s> et al. (Nov 15, 2013)</p>
<p>Published in: <i>PoS</i> LATTICE2013 (2014) 301 • Contribution to: <a>Lattice 2013</a>, 301 • e-<br>Print: <a>1311.3885</a> [hep-lat]</p>
<p>Note: 7 pages, 7 figures, presented at the 31st International Symposium on Lattice<br>Field Theory (Lattice 2013), 29 July - 3 August 2013, Mainz, Germany</p>
<div class="acts"><div><span class="act"><svg><use href="#pdf"/></svg>pdf</span><span class="act up"><svg><use href="#link"/></svg>links</span><span class="act"><svg><use href="#link"/></svg>DOI</span><span class="act up"><svg><use href="#cite"/></svg>cite</span><span class="act"><svg><use href="#edit"/></svg>edit</span><span class="act off"><svg><use href="#claim"/></svg>claim</span></div><div><span class="act"><svg><use href="#ref"/></svg>reference search</span><span class="act"><svg><use href="#cit"/></svg>1 citation</span></div></div></div></article>

<div class="pager"><span class="dis"><svg viewBox="0 0 12 12"><path d="M8.500 1.500l-5 4.500 5 4.500"/></svg></span><span class="cur">1</span><span>2</span><span><svg viewBox="0 0 12 12"><path d="M3.500 1.500l5 4.500-5 4.500"/></svg></span><span class="size">25 / page <svg class="dn"><use href="#down"/></svg></span></div>
</main>
</div>
<footer>
<div class="cols">
<div><h4>INSPIRE</h4><a>About INSPIRE</a><a>Content Policy</a><a>Privacy Notice</a><a>Terms of Use</a></div>
<div><h4>Help</h4><a>FAQ</a><a>INSPIRE Help</a><a>Report metadata issues</a></div>
<div><h4>Tools</h4><a>Holdingpen</a><a>Author list</a><a>Bibliography generator</a></div>
<div><h4>Community</h4><a>Blog</a><a>Twitter</a><a>Contact</a></div>
</div>
<div class="base"><span>Powered by Invenio</span><span class="made">Made with <svg viewBox="0 0 12 12"><path d="M6 11.500C2 8 .3 6 .3 3.500.3 1.800 1.500.8 3 .8c1.300 0 2.400.8 3 1.900C6.600 1.600 7.700.8 9 .8c1.500 0 2.700 1 2.700 2.700C11.700 6 10 8 6 11.500z"/></svg> by the INSPIRE Team</span></div>
</footer>
<div class="feedback"><svg viewBox="0 0 16 16"><path d="M2.200 14V8A6 6 0 1 1 8 14.200zM5 8h.6M7.800 8h.6M10.600 8h.6"/></svg><span>Feedback</span></div>
</div></div>
</body>
</html>
```
FILE: styles.css
```css
* { box-sizing: border-box; }
body { margin: 0; background: #f0f2f5; }
.defs { position: absolute; width: 0; height: 0; }
.window { width: 569px; height: 4096px; overflow: hidden; }
/* The layout is authored at 1000px and scaled to the window. */
.page {
  position: relative;
  width: 1000px;
  height: 7198px;
  transform: scale(.569);
  transform-origin: 0 0;
  font: 14px/22px "DejaVu Sans", sans-serif;
  color: rgba(0, 0, 0, .77);
  background: #f0f2f5;
  white-space: nowrap;
  display: flex;
  flex-direction: column;
}
svg { fill: none; stroke: currentColor; stroke-width: 1.2; }
p, ul, h2, h3, h4 { margin: 0; padding: 0; font-weight: 400; }
a { color: #0050b3; }
s { text-decoration: none; color: rgba(0, 0, 0, .58); }
u { flex: none; width: 16px; height: 16px; border: 1px solid #d9d9d9; border-radius: 2px; background: #fff; }

/* header */
.top { height: 100px; background: #001529; color: #fff; }
.top a { color: #fff; }
.top-row { display: flex; align-items: center; height: 64px; padding-left: 12px; }
.logo { width: 160px; height: 36px; margin-right: 47px; stroke: none; fill: #fff; overflow: visible; }
.logo .lg-b { font: 700 27.5px "Liberation Sans", sans-serif; }
.logo .lg-l { font: 300 27.5px Lato, "Liberation Sans", sans-serif; }
.logo .lg-h { font: 700 13.300px "Liberation Sans", sans-serif; letter-spacing: 2px; }
.dots { fill: #27d3fb; }
.search { display: flex; width: 479px; height: 40px; margin-right: 52px; }
.scope { display: flex; align-items: center; justify-content: space-between; width: 108px; padding: 0 12px; background: #fafafa; border: 1px solid #d9d9d9; border-radius: 2px 0 0 2px; color: rgba(0, 0, 0, .77); }
.field { flex: 1; background: #fff; border: 1px solid #d9d9d9; border-left: 0; }
.go { width: 48px; display: flex; align-items: center; justify-content: center; background: #1890ff; border-radius: 0 2px 2px 0; }
.go svg { width: 16px; height: 16px; margin-top: -3px; }
.dn { width: 12px; height: 12px; color: rgba(0, 0, 0, .27); }
.acct { display: flex; gap: 39.500px; }
nav { display: flex; gap: 64px; padding-left: 154.500px; font-size: 16px; }
nav a { height: 24px; line-height: 25px; }
nav .on { border-bottom: 2px solid #fff; }

/* page columns */
.body { flex: none; height: 6693px; display: flex; align-items: flex-start; gap: 32px; padding: 16px 0 0 12px; }
aside { width: 238px; height: 2147px; background: #fff; padding: 17px 16px 0; }
h3 { font-size: 16px; line-height: 22px; color: rgba(0, 0, 0, .85); }
.hist { display: block; width: 204px; height: 100px; margin-top: 15px; fill: #91d5ff; stroke: none; }
.slider { display: flex; justify-content: space-between; align-items: center; width: 208px; height: 14px; margin: 9px 0 0 -1px; background: linear-gradient(#91d5ff, #91d5ff) center / 194px 4px no-repeat; }
.slider b { width: 14px; height: 14px; border: 2px solid #91d5ff; border-radius: 50%; background: #fff; }
.years { display: flex; justify-content: space-between; margin: 1px -5px 48px -12px; }
aside ul { list-style: none; margin: 15px 8px 44px 0; }
aside li { display: flex; align-items: center; height: 22px; margin-bottom: 9px; }
aside li p { margin: 0 auto 0 8px; }
aside li em { position: relative; top: .8px; height: 22px; padding: 0 7px; border: 1px solid #d9d9d9; border-radius: 2px; background: #fafafa; font: 12px/20px "DejaVu Sans", sans-serif; }
aside li.wrap { flex-wrap: wrap; height: auto; align-items: flex-start; }
aside li.wrap u { margin-top: 3px; }
aside li.wrap p { width: 170px; }
.q { width: 14px; height: 14px; vertical-align: -2px; }
.years + h3 { margin-top: 0; }
.more { display: block; width: 101px; margin: -44px 0 34px; padding: 0 5px; background: #f0f2f5; border-radius: 2px; color: rgba(0, 0, 0, .42); font-size: 13px; }

/* results toolbar */
main { width: 625px; }
.bar { display: flex; justify-content: space-between; height: 73.500px; }
.line { display: flex; align-items: center; height: 32px; }
.count { margin: 0 15.500px 0 4px; }
.sep { width: 1px; height: 13px; margin-right: 24px; background: rgba(0, 0, 0, .75); }
.two { gap: 30px; padding-left: 15.500px; }
.bar-r { display: flex; flex-direction: column; align-items: flex-end; padding-top: 6px; }
.sum { display: flex; gap: 9px; height: 22px; margin-right: 8px; }
.switch { display: flex; align-items: center; justify-content: space-between; width: 44px; height: 22px; padding: 0 7px 0 2px; border-radius: 11px; background: #bcbcbd; color: #fff; }
.switch i { width: 18px; height: 18px; border-radius: 50%; background: #fff; }
.switch svg { width: 12px; height: 12px; }
.sort { display: flex; align-items: center; justify-content: space-between; width: 129px; height: 32px; padding: 0 11px 0 12px; background: #fff; border: 1px solid #d9d9d9; border-radius: 2px; }

/* result cards */
article { display: flex; gap: 5px; margin-bottom: 8.850px; }
article > u { margin-top: 2px; }
.ck { background: #1890ff; border-color: #1890ff; color: #fff; }
.ck svg { display: block; width: 16px; height: 16px; margin: -1px; stroke-width: 2; }
.card { flex: 1; background: #fff; border: 1px solid #e6e7e9; border-radius: 2px; padding: 6.700px 9px 0 7px; }
.head { display: flex; justify-content: space-between; }
h2 { font-size: 17.500px; line-height: 27.500px; color: rgba(0, 0, 0, .87); }
.head b { font-weight: 400; line-height: 24px; color: rgba(0, 0, 0, .32); }
.card p { margin-top: 4px; }
.card .au { margin-top: 5px; }
.acts { display: flex; flex-wrap: wrap; justify-content: space-between; margin-top: 8px; }
.nonote { margin-top: 12px; }
.acts > div { display: flex; gap: 30px; height: 32.200px; }
.act { display: flex; align-items: center; gap: 8px; height: 32px; line-height: 32px; }
.act svg { width: 16px; height: 16px; margin-top: -1px; }
.up, .off { line-height: 29px; align-items: flex-start; }
.up svg, .off svg { margin-top: 7.500px; }
.up { height: 35px; border-bottom: 2px solid rgba(0, 0, 0, .015); }
.line .up { margin-top: 2px; }
.off { color: rgba(0, 0, 0, .24); }
.math { display: inline-flex; justify-content: space-between; align-items: baseline; height: 20px; line-height: 20px; font-family: "Liberation Serif", serif; font-size: 21.200px; }
.math sub { font-size: 15px; line-height: 0; vertical-align: -4px; }
.m20 { width: 20px; } .m44 { width: 44px; } .m47 { width: 47px; } .m65 { width: 65px; } .m72 { width: 72px; } .m138 { width: 138px; }

/* pagination */
.pager { display: flex; gap: 8px; padding-left: 174px; }
.pager span { display: flex; align-items: center; justify-content: center; width: 32px; height: 32px; background: #fff; border: 1px solid #d9d9d9; border-radius: 2px; }
.pager svg { width: 12px; height: 12px; }
.pager .dis { color: rgba(0, 0, 0, .25); }
.pager .cur { color: #1890ff; border-color: #1890ff; }
.pager .size { justify-content: space-between; width: 109px; margin-left: 8px; padding: 0 10px 0 11px; }

/* footer */
footer { flex: none; height: 405px; background: #001529; color: #fff; }
.cols { display: grid; grid-template-columns: 220.500px 285.500px 281.500px auto; height: 340px; padding: 80px 0 0 60px; }
h4 { font-size: 16px; line-height: 24px; margin-bottom: 18px; }
.cols a { display: block; height: 33px; line-height: 33px; color: rgba(255, 255, 255, .82); }
.base { display: flex; justify-content: space-between; height: 65px; padding-top: 21px; border-top: 1px solid #3f4d5e; font-size: 16px; color: rgba(255, 255, 255, .92); }
.made { color: rgba(255, 255, 255, .4); }
.made svg { width: 12px; height: 14px; vertical-align: -1px; fill: #ff4136; stroke: none; }

/* feedback tab over the page edge */
.feedback { position: absolute; left: 963px; top: 370px; width: 37px; height: 132px; display: flex; align-items: center; gap: 8px; padding-top: 15px; writing-mode: vertical-rl; transform: rotate(180deg); background: #1890ff; border-radius: 0 4px 4px 0; color: #fff; font-size: 16px; line-height: 37px; }
.feedback svg { width: 16px; height: 16px; transform: rotate(90deg); }
```
